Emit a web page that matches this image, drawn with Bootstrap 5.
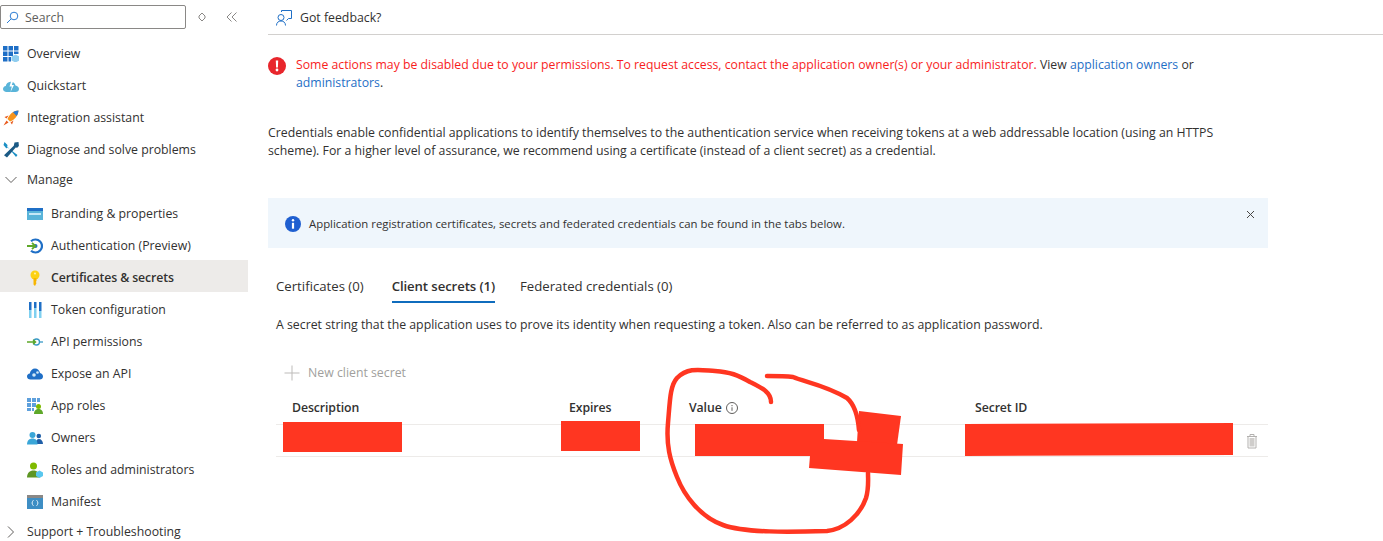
<!DOCTYPE html>
<html lang="en">
<head>
  <meta charset="UTF-8">
  <meta name="viewport" content="width=device-width, initial-scale=1">
  <title>Certificates &amp; secrets</title>
  <link href="https://cdn.jsdelivr.net/npm/bootstrap@5.3.0/dist/css/bootstrap.min.css" rel="stylesheet">
  <style>
    html, body { height: 100%; overflow: hidden; }
    body {
      background: #fff;
      color: #323130;
      font-family: "Open Sans", "Noto Sans", sans-serif;
      font-size: 12.3px;
      line-height: 18px;
      position: relative;
    }
    a { text-decoration: none; color: #1f6fc6; }
    /* sidebar */
    .side-pane { width: 248px; flex: none; }
    .search-row { height: 36px; padding-top: 5px; }
    .search-box { width: 186px; height: 24px; border: 1px solid #8a8886; border-radius: 2px; padding-left: 5px; color: #605e5c; padding-top: 1px; }
    .search-box input { border: 0; padding: 0; margin-left: 6px; font-size: 12.3px; width: 140px; outline: 0; color: #605e5c; background: none; }
    .search-box input::placeholder { color: #605e5c; opacity: 1; }
    .pane-btn { width: 30px; height: 24px; margin-left: 1px; }
    .pane-btn + .pane-btn { margin-left: 0; }
    .side-link { height: 32px; padding: 4px 0 0 3px; color: #323130; gap: 8px; }
    .side-link svg { width: 16px; height: 16px; flex: none; }
    .side-link.sub { padding-left: 27px; }
    .side-link.group { padding: 1px 0 1px 5px; gap: 10px; }
    .side-link.group svg { width: 12px; height: 12px; }
    .side-link.here { background: #edebe9; font-weight: 600; letter-spacing: -.12px; }
    .side-link:hover { color: #323130; }
    /* main */
    .main-pane { min-width: 0; flex: 1; padding-left: 20px; }
    .top-bar { height: 35px; border-bottom: 1px solid #d2d0ce; padding: 1px 0 0 8px; gap: 8px; margin-bottom: 21px; }
    .deny-note { width: 950px; gap: 10px; margin-bottom: 32px; font-size: 12.26px; }
    .deny-text { color: #f81d1d; }
    .intro-text { width: 950px; margin-bottom: 38px; }
    .info-bar { width: 1000px; height: 50px; background: #eff6fc; border: 0; border-radius: 0; padding: 2px 13px 0 17px; margin-bottom: 25px; gap: 8px; font-size: 11.36px; }
    .info-bar .close-x { margin-left: auto; margin-top: -20px; }
    .tab-strip { padding-left: 8px; gap: 25px; height: 30px; }
    .tab-strip .nav-item:first-child { margin-right: 3px; }
    .tab-strip .nav-link { padding: 0; color: #323130; height: 30px; line-height: 26px; font-size: 13.2px; }
    .tab-strip .nav-link.active { font-weight: 600; letter-spacing: -.1px; border-bottom: 2px solid #0f6cbd; }
    .tab-note { padding-left: 8px; margin: 13px 0 27px; }
    .add-btn { padding: 0 0 0 16px; border: 0; gap: 8px; color: #a19f9d; font-size: 12.3px; height: 24px; margin-bottom: 9px; }
    .btn.add-btn:disabled { color: #a19f9d; opacity: 1; }
    .secret-table { width: 992px; margin: 0 0 0 8px; table-layout: fixed; color: #323130; }
    .secret-table th { font-weight: 600; padding: 0 0 2px 16px; height: 30px; vertical-align: middle; border-bottom: 1px solid #edebe9; letter-spacing: -.1px; }
    .secret-table td { height: 32px; padding: 0 0 0 16px; vertical-align: middle; border-bottom: 1px solid #edebe9; }
    .secret-table td.row-act { padding-left: 8px; }
    .c-desc, .c-id { width: 277px; }
    .c-exp { width: 120px; }
    .c-val { width: 286px; }
    .c-act { width: 32px; }
    /* marker scribbles drawn on the screenshot */
    .scribble { position: absolute; left: 0; top: 0; pointer-events: none; }
  </style>
</head>
<body>
<div class="d-flex h-100">
  <!-- left menu -->
  <div class="side-pane">
    <div class="search-row d-flex align-items-start">
      <div class="search-box d-flex align-items-center flex-shrink-0">
        <svg width="13" height="13" viewBox="0 0 13 13" fill="none" stroke="#2b7cd3"><circle cx="8" cy="5" r="3.800"/><path d="M5.200 7.800 1 12"/></svg>
        <input type="text" placeholder="Search">
      </div>
      <div class="pane-btn d-flex align-items-center justify-content-center"><svg width="10" height="12" viewBox="0 0 10 12" fill="none" stroke="#8a8886"><path d="M5 2 8 5 8 7 5 10 2 7 2 5Z"/></svg></div>
      <div class="pane-btn d-flex align-items-center justify-content-center"><svg width="12" height="12" viewBox="0 0 12 12" fill="none" stroke="#8a8886"><path d="M5.500 1.500 1 6l4.500 4.500M10.500 1.500 6 6l4.500 4.500"/></svg></div>
    </div>
    <nav class="nav flex-column">
      <a class="nav-link side-link d-flex align-items-center" href="#">
        <svg viewBox="0 0 16 16"><path fill="#1f6fc6" d="M0 0h4.500v4.500H0zM5.500 0H10v4.500H5.500zM11 0h4.500v4.500H11zM0 5.500h4.500V10H0zM5.500 5.500H10V10H5.500zM11 5.500h4.500V8H11zM0 11h4.500v4.500H0zM5.500 11H8v4.500H5.500z"/><path fill="#8fcdef" d="m12.500 8.500 4 2v4l-4 2-4-2v-4z"/></svg>
        Overview</a>
      <a class="nav-link side-link d-flex align-items-center" href="#">
        <svg viewBox="0 0 16 16"><path fill="#59b4d9" d="M3.500 14C1.500 14 0 12.600 0 11s1.200-2.800 2.800-3C3.200 5.500 5 4 7.500 3.800 10 3.600 12 5 12.500 7.500c2 .2 3.500 1.700 3.500 3.400 0 1.700-1.500 3.100-3.500 3.100z"/><path fill="#fff" d="M8.500 2 6.500 8.500h2.300L7.500 14 11 7H8.800L10.500 2z"/></svg>
        Quickstart</a>
      <a class="nav-link side-link d-flex align-items-center" href="#">
        <svg viewBox="0 0 16 16"><path fill="#f7941d" d="M15.500.5C10 1 6.500 4 4.500 9l2.500 2.500C12 9.500 15 6 15.500.5z"/><path fill="#2b7cd3" d="M15.500.5c-2.200.2-4 .8-5.500 1.800L13.700 6c1-1.500 1.600-3.300 1.800-5.500z"/><path fill="#e8591c" d="M5.500 5.500 1.500 7l2 1.500zM10.500 10.500 9 14.500l-1.500-2zM3.500 10.500.5 15.500l5-3z"/></svg>
        Integration assistant</a>
      <a class="nav-link side-link d-flex align-items-center" href="#">
        <svg viewBox="0 0 16 16"><path fill="#1b8fc4" d="m1.500 0 3 3-.3 2.300L14.500 13 13 15 5.500 5.800l-2.300.4L.5 3z"/><path fill="#1b5a85" d="M11.500.5 15.500 0l.4 4-1.700 1.800-1.500-.3L4 15.500 1 13.300l9.800-9.600z"/></svg>
        Diagnose and solve problems</a>
      <a class="nav-link side-link group d-flex align-items-center" href="#">
        <svg viewBox="0 0 12 12" fill="none" stroke="#605e5c"><path d="m.5 3 5.500 5.500L11.500 3"/></svg>
        Manage</a>
      <a class="nav-link side-link sub d-flex align-items-center" href="#">
        <svg viewBox="0 0 16 16"><path fill="#59b4d9" d="M0 2h16v12H0z"/><path fill="#1f6fc6" d="M0 2h16v3H0z"/><path fill="#c5e8f7" d="M2 7h12v2H2z"/></svg>
        Branding &amp; properties</a>
      <a class="nav-link side-link sub d-flex align-items-center" href="#">
        <svg viewBox="0 0 16 16" fill="none"><path stroke="#1f6fc6" stroke-width="2.200" d="M4 3.300A6.500 6.500 0 1 1 4 12.700"/><circle cx="8.500" cy="8" r="2" fill="#1f6fc6"/><path stroke="#5ea829" stroke-width="1.800" d="M0 8h8M5 4.800 8.300 8 5 11.200"/></svg>
        Authentication (Preview)</a>
      <a class="nav-link side-link sub here d-flex align-items-center" href="#">
        <svg viewBox="0 0 16 16"><circle cx="8" cy="5" r="4.500" fill="#fcd116"/><path fill="#f7b500" d="M6.500 8h3v3L8.800 12l.7 1-1.500 3-1.500-1.500z"/><circle cx="8" cy="3.500" r="1" fill="#fff3b0"/></svg>
        Certificates &amp; secrets</a>
      <a class="nav-link side-link sub d-flex align-items-center" href="#">
        <svg viewBox="0 0 16 16"><path fill="#1f6fc6" d="M2 0h2.500v8H2zM7 0h2.500v6H7zM12 0h2.500v9H12z"/><path fill="#7fd0f0" d="M2 8h2.500v8H2zM7 6h2.500v10H7zM12 9h2.500v7H12z"/></svg>
        Token configuration</a>
      <a class="nav-link side-link sub d-flex align-items-center" href="#">
        <svg viewBox="0 0 16 16" fill="none"><circle cx="9.500" cy="8" r="3" stroke="#3999c6" stroke-width="1.300"/><path stroke="#3999c6" stroke-width="1.300" d="M12.500 8H16"/><path stroke="#5ea829" stroke-width="1.500" d="M0 8h8M6 5.800 8.500 8 6 10.200"/></svg>
        API permissions</a>
      <a class="nav-link side-link sub d-flex align-items-center" href="#">
        <svg viewBox="0 0 16 16"><path fill="#1f6fc6" d="M3.500 13.500C1.500 13.500 0 12.200 0 10.500S1.200 7.700 2.800 7.500C3.200 4.500 5.500 2.500 8 2.500s4.500 1.800 5 4.500c1.800.3 3 1.700 3 3.400 0 1.700-1.300 3.100-3.300 3.100z"/><circle cx="7" cy="9" r="1.800" fill="#cfe8f7"/><circle cx="10.500" cy="6.500" r="1.300" fill="#cfe8f7"/></svg>
        Expose an API</a>
      <a class="nav-link side-link sub d-flex align-items-center" href="#">
        <svg viewBox="0 0 16 16"><path fill="#5ea0dc" d="M0 0h4v4H0zM5 0h4v4H5zM10 0h3v4h-3zM0 5h4v4H0zM5 5h4v4H5zM0 10h4v3H0zM5 10h2v3H5z"/><circle cx="11.500" cy="8.500" r="2.500" fill="#7fba00"/><path fill="#5ea829" d="M7 16c0-3.500 2-5 4.500-5s4.500 1.500 4.500 5z"/></svg>
        App roles</a>
      <a class="nav-link side-link sub d-flex align-items-center" href="#">
        <svg viewBox="0 0 16 16"><circle cx="11.800" cy="6" r="2.300" fill="#1f5fa8"/><path fill="#1f5fa8" d="M8.500 14c0-3 1.400-5 3.500-5s4 2 4 5z"/><circle cx="5.500" cy="5" r="3" fill="#3aa6d8"/><path fill="#3aa6d8" d="M0 14.500c0-4 2.300-6 5.500-6s5 2 5 6z"/></svg>
        Owners</a>
      <a class="nav-link side-link sub d-flex align-items-center" href="#">
        <svg viewBox="0 0 16 16"><circle cx="6.500" cy="4" r="3.500" fill="#7fba00"/><path fill="#5e9624" d="M0 15.500c0-4.500 2.800-7 6.500-7s6 2.500 6 7z"/><path fill="#59c7ee" d="m12.500 8.500 3.500 2v3.500l-3.500 2-3.500-2v-3.500z"/></svg>
        Roles and administrators</a>
      <a class="nav-link side-link sub d-flex align-items-center" href="#">
        <svg viewBox="0 0 16 16"><path fill="#3e8ec4" d="M0 2h16v13H0z"/><path fill="#8a8886" d="M0 1h16v3H0z"/><path fill="none" stroke="#e6f3fb" d="M6.500 6.500c-1 0-1 .7-1 1.500 0 .6-.5 1-.7 1 .2 0 .7.400.7 1 0 .8 0 1.500 1 1.500M9.500 6.500c1 0 1 .7 1 1.500 0 .6.500 1 .7 1-.2 0-.7.400-.7 1 0 .8 0 1.500-1 1.500"/></svg>
        Manifest</a>
      <a class="nav-link side-link group d-flex align-items-center" href="#">
        <svg viewBox="0 0 12 12" fill="none" stroke="#605e5c"><path d="m3 .5 5.500 5.500L3 11.500"/></svg>
        Support + Troubleshooting</a>
    </nav>
  </div>

  <!-- page content -->
  <div class="main-pane">
    <div class="top-bar d-flex align-items-center">
      <svg width="16" height="16" viewBox="0 0 16 16" fill="none" stroke="#1f6fc6"><circle cx="5" cy="7.500" r="3"/><path d="M.5 15.500c0-3 2-4.500 4.500-4.500s4.500 1.500 4.500 4.500M5.500 2V.5h10v8h-3l-2 2"/></svg>
      <span>Got feedback?</span>
    </div>

    <div class="deny-note d-flex align-items-start">
      <svg class="flex-shrink-0" width="18" height="19" viewBox="0 0 18 19"><circle cx="9" cy="10" r="9" fill="#e8262c"/><path fill="#fff" d="M7.800 4.500h2.400l-.3 7H8.100z"/><circle cx="9" cy="14" r="1.400" fill="#fff"/></svg>
      <span><span class="deny-text">Some actions may be disabled due to your permissions. To request access, contact the application owner(s) or your administrator.</span> View <a href="#">application owners</a> or <a href="#">administrators</a>.</span>
    </div>

    <p class="intro-text">Credentials enable confidential applications to identify themselves to the authentication service when receiving tokens at a web addressable location (using an HTTPS scheme). For a higher level of assurance, we recommend using a certificate (instead of a client secret) as a credential.</p>

    <div class="alert info-bar d-flex align-items-center" role="alert">
      <svg class="flex-shrink-0" width="16" height="16" viewBox="0 0 16 16"><circle cx="8" cy="8" r="8" fill="#1f5fd0"/><circle cx="8" cy="4.300" r="1.200" fill="#fff"/><path fill="#fff" d="M6.900 6.800h2.200v5.900H6.900z"/></svg>
      <span>Application registration certificates, secrets and federated credentials can be found in the tabs below.</span>
      <svg class="close-x" width="9" height="9" viewBox="0 0 9 9" fill="none" stroke="#484644"><path d="m1 1 7 7M8 1 1 8"/></svg>
    </div>

    <ul class="nav tab-strip">
      <li class="nav-item"><a class="nav-link" href="#">Certificates (0)</a></li>
      <li class="nav-item"><a class="nav-link active" href="#">Client secrets (1)</a></li>
      <li class="nav-item"><a class="nav-link" href="#">Federated credentials (0)</a></li>
    </ul>
    <p class="tab-note">A secret string that the application uses to prove its identity when requesting a token. Also can be referred to as application password.</p>

    <button class="btn add-btn d-flex align-items-center" disabled>
      <svg width="16" height="16" viewBox="0 0 16 16" fill="none" stroke="#bdbbb9"><path d="M8 .5v15M.5 8h15"/></svg>
      New client secret
    </button>

    <table class="table secret-table">
      <colgroup><col class="c-desc"><col class="c-exp"><col class="c-val"><col class="c-id"><col class="c-act"></colgroup>
      <thead>
        <tr>
          <th>Description</th>
          <th>Expires</th>
          <th><span class="d-inline-flex align-items-center gap-1">Value
            <svg width="12" height="12" viewBox="0 0 12 12" fill="none" stroke="#605e5c"><circle cx="6" cy="6" r="5.500"/><path d="M6 5.300v3.500M6 3v1.200"/></svg></span></th>
          <th>Secret ID</th>
          <th></th>
        </tr>
      </thead>
      <tbody>
        <tr>
          <td></td><td></td><td></td><td></td>
          <td class="row-act"><svg width="16" height="16" viewBox="0 0 16 16"><path fill="none" stroke="#b3b1af" d="M3 3.500h10M6 3.500V1.500h4v2M4 3.500v11.500h8V3.500"/><path fill="#cfcdcb" d="M5.500 5h5v8.500h-5z"/></svg></td>
        </tr>
      </tbody>
    </table>
  </div>
</div>

<!-- red marker over the screenshot -->
<svg class="scribble" width="1383" height="541" viewBox="0 0 1383 541">
  <g fill="#ff3621">
    <path d="M283 422h119v30H283zM561 421h79v30h-79zM695 424h129v32H695z"/>
    <path d="M965 424 1233 423v32L965 456z"/>
    <path d="M859 411 901 416 897 445 857 442z"/>
    <path d="M824 439 903 444 901 475 809 468 810 456 824 456z"/>
  </g>
  <g fill="none" stroke="#ff3621" stroke-width="4.500" stroke-linecap="round" stroke-linejoin="round">
    <path d="M771 402C771 392 762 388 750 382 738 375 730 372 715 371 700 370 688 367 677 378 670 386 670 400 668 423 666 445 670 460 677 477 684 495 700 517 723 525 745 533 790 532 827 531 845 529 860 515 866 498 869 488 868 480 868 473"/>
    <path d="M767 376C780 376 785 376 793 377 805 382 825 385 847 398 855 405 858 417 859 430"/>
  </g>
</svg>
<script src="https://cdn.jsdelivr.net/npm/bootstrap@5.3.0/dist/js/bootstrap.bundle.min.js"></script>
</body>
</html>
